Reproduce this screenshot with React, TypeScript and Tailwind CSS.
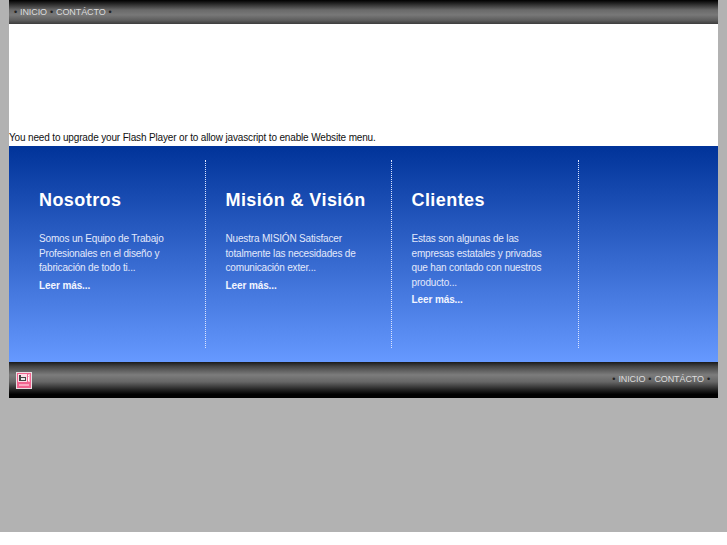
const NavLinks = () => (
  <div className="flex items-center gap-[3px] text-[9px] leading-none tracking-[-0.1px] text-[#dddddd]">
    <span className="text-[#222]">•</span>
    <span>INICIO</span>
    <span className="text-[#222]">•</span>
    <span>CONTÁCTO</span>
    <span className="text-[#222]">•</span>
  </div>
)

const columns = [
  {
    title: 'Nosotros',
    lines: ['Somos un Equipo de Trabajo', 'Profesionales en el diseño y', 'fabricación de todo ti...'],
  },
  {
    title: 'Misión & Visión',
    lines: ['Nuestra MISIÓN Satisfacer', 'totalmente las necesidades de', 'comunicación exter...'],
  },
  {
    title: 'Clientes',
    lines: ['Estas son algunas de las', 'empresas estatales y privadas', 'que han contado con nuestros', 'producto...'],
  },
]

const Logo = () => (
  <svg width="16" height="17" viewBox="0 0 16 17" className="block">
    <rect x="0" y="0" width="16" height="17" fill="#e8dfe2" />
    <rect x="1" y="1" width="14" height="15" fill="#f0648f" />
    <rect x="2" y="2" width="9" height="8" fill="#fbdde6" />
    <rect x="12" y="2" width="2" height="8" fill="#f9b4c8" />
    <path d="M3 3h2v2h5v4H3z" fill="#444" />
    <rect x="5" y="6" width="4" height="2" fill="#e8e8e8" />
    <rect x="12" y="3" width="1" height="1" fill="#fff" />
    <rect x="12" y="5" width="1" height="4" fill="#fff" />
    <rect x="3" y="12" width="10" height="2" fill="#f9a8c0" />
  </svg>
)

export default function App() {
  return (
    <div className="min-h-[532px] bg-[#b2b2b2] font-['Liberation_Sans',Arial,sans-serif]">
      <div className="mx-[9px] w-[709px]">
        <div className="flex h-[24px] items-center bg-[linear-gradient(to_bottom,#000_0%,#222_14%,#6a6a6a_42%,#787878_62%,#5c5c5c_85%,#3c3c3c_100%)] pl-[5px]">
          <NavLinks />
        </div>

        <div className="flex h-[122px] items-end bg-white pb-[2px] text-[10px] leading-[12px] tracking-[-0.155px] text-[#111]">
          You need to upgrade your Flash Player or to allow javascript to enable Website menu.
        </div>

        <div className="grid h-[216px] grid-cols-[196.5px_186px_187px_1fr] bg-[linear-gradient(to_bottom,#003399_0%,#6699ff_100%)] py-[14px]">
          {columns.map((col) => (
            <div key={col.title} className="border-r border-dotted border-[#dbe4ff] pl-[20px] first:pl-[30px]">
              <h2 className="mt-[28px] text-[18px] leading-[24px] font-bold tracking-[0.43px] text-white">{col.title}</h2>
              <div className="mt-[20px] text-[10px] leading-[14.5px] tracking-[-0.17px] text-[#e3e9fb]">
                {col.lines.map((line) => (
                  <div key={line}>{line}</div>
                ))}
              </div>
              <div className="mt-[3px] text-[10px] leading-[14px] font-bold tracking-[-0.1px] text-[#f2f5ff]">Leer más...</div>
            </div>
          ))}
        </div>

        <div className="flex h-[36px] items-center justify-between bg-[linear-gradient(to_bottom,#1a1a1a_0%,#444_12%,#7c7c7c_36%,#666_55%,#1a1a1a_80%,#000_90%,#000_100%)] pr-[8px] pb-[2px] pl-[7px]">
          <div className="pt-[2px]">
            <Logo />
          </div>
          <NavLinks />
        </div>
      </div>
    </div>
  )
}
